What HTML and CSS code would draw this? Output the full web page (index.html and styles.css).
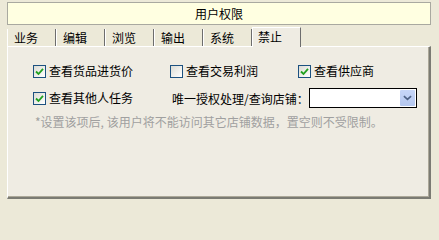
FILE: index.html
```html
<!DOCTYPE html>
<html>
<head>
<meta charset="utf-8">
<link rel="stylesheet" href="styles.css">
</head>
<body>
<div class="wrap">
  <div class="title">用户权限</div>
  <div class="tabs">
    <div class="tab">业务</div>
    <div class="tab">编辑</div>
    <div class="tab">浏览</div>
    <div class="tab">输出</div>
    <div class="tab">系统</div>
    <div class="tab active">禁止</div>
  </div>
  <div class="panel">
    <div class="row">
      <label class="item c1"><span class="cb on"><svg viewBox="0 0 9 9" width="9" height="9"><path d="M1 4.5 L3.5 7 L8 1.8" fill="none" stroke="#21a121" stroke-width="1.8"/></svg></span>查看货品进货价</label>
      <label class="item c2"><span class="cb"></span>查看交易利润</label>
      <label class="item c3"><span class="cb on"><svg viewBox="0 0 9 9" width="9" height="9"><path d="M1 4.5 L3.5 7 L8 1.8" fill="none" stroke="#21a121" stroke-width="1.8"/></svg></span>查看供应商</label>
    </div>
    <div class="row row2">
      <label class="item c1"><span class="cb on"><svg viewBox="0 0 9 9" width="9" height="9"><path d="M1 4.5 L3.5 7 L8 1.8" fill="none" stroke="#21a121" stroke-width="1.8"/></svg></span>查看其他人任务</label>
      <span class="lbl">唯一授权处理/查询店铺：</span>
      <div class="select"><span class="btn"><svg viewBox="0 0 10 6" width="9" height="6"><path d="M1 1 L5 4.5 L9 1" fill="none" stroke="#4d6185" stroke-width="1.8"/></svg></span></div>
    </div>
    <div class="note">*设置该项后, 该用户将不能访问其它店铺数据，置空则不受限制。</div>
  </div>
</div>
</body>
</html>
```
FILE: styles.css
```css
html, body {
  margin: 0;
  padding: 0;
  background: #ece9d8;
  font-family: "Noto Sans CJK SC", "Liberation Sans", sans-serif;
  font-size: 12px;
  color: #000;
}
.wrap {
  width: 424px;
  padding: 2px 0 0 7px;
}
.title {
  height: 21px;
  line-height: 21px;
  border: 1px solid #a9a9a0;
  background: #ffffe1;
  text-align: center;
}
.tabs {
  display: flex;
  height: 19px;
  margin-top: 2px;
  align-items: flex-end;
}
.tab {
  width: 41px;
  height: 17px;
  line-height: 17px;
  padding-left: 6px;
  border-left: 1px solid #fff;
  border-right: 1px solid #6d6d6d;
  background: #ece9d8;
}
.tab.active {
  height: 19px;
  line-height: 17px;
  border-top: 1px solid #fff;
  background: #efece3;
  padding-left: 5px;
  width: 42px;
  position: relative;
  z-index: 1;
  margin-bottom: -1px;
}
.panel {
  border-top: 1px solid #fff;
  border-left: 1px solid #fff;
  border-right: 2px solid #7b7b73;
  border-bottom: 2px solid #7b7b73;
  background: #efece3;
  padding: 17px 0 0 25px;
  box-sizing: border-box;
  height: 153px;
  box-shadow: inset -1px -1px 0 #aca899;
}
.row {
  display: flex;
  align-items: center;
  height: 14px;
}
.row2 {
  margin-top: 10px;
  height: 20px;
}
.item {
  display: flex;
  align-items: center;
  gap: 3px;
  line-height: 14px;
}
.c1 { width: 137px; }
.c2 { width: 128px; }
.cb {
  width: 11px;
  height: 11px;
  border: 1px solid #1c5180;
  background: linear-gradient(135deg, #dcdcd4, #fff);
  display: flex;
  align-items: center;
  justify-content: center;
}
.lbl {
  margin-left: 2px;
}
.select {
  width: 105px;
  height: 18px;
  border: 1px solid #000;
  background: #fff;
  display: flex;
  justify-content: flex-end;
  align-items: center;
  padding-right: 1px;
}
.btn {
  width: 15px;
  height: 16px;
  background: linear-gradient(180deg, #c7d6f8, #b4c7ef);
  border-radius: 1px;
  display: flex;
  align-items: center;
  justify-content: center;
}
.note {
  margin-top: 5px;
  margin-left: 2px;
  color: #a0a0a0;
}
```
